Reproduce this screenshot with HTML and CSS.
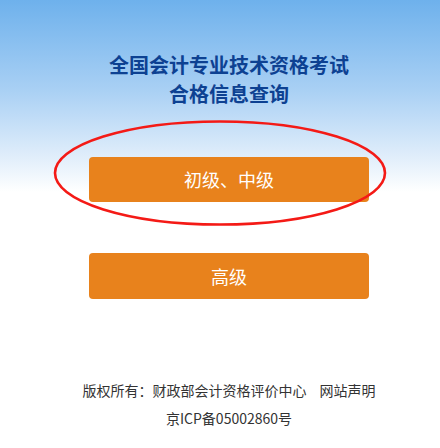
FILE: index.html
```html
<!DOCTYPE html>
<html lang="zh-CN">
<head>
  <meta charset="UTF-8" />
  <title>合格信息查询</title>
  <link rel="stylesheet" href="styles.css">
</head>
<body>
  <div class="page">
    <h1 class="title">全国会计专业技术资格考试<br>合格信息查询</h1>

    <div class="menu">
      <a class="level-btn" href="#">初级、中级</a>
      <a class="level-btn" href="#">高级</a>
      <!-- red mark round the first button -->
      <svg class="mark" width="336" height="108" viewBox="0 0 336 108">
        <ellipse cx="168" cy="54" rx="165" ry="51.5" fill="none" stroke="#f41a16" stroke-width="2.6" />
      </svg>
    </div>

    <div class="footer">
      <p>版权所有：财政部会计资格评价中心<span class="notice">网站声明</span></p>
      <p>京ICP备05002860号</p>
    </div>
  </div>
</body>
</html>
```

FILE: styles.css
```css
body { margin: 0; font-family: "Noto Sans CJK SC", "Noto Sans", sans-serif; }
.page {
  height: 448px;
  padding: 50px 0 0 18px;
  box-sizing: border-box;
  background: linear-gradient(to bottom, #6eb1ec 0px, #a9d0f4 90px, #e3effb 160px, #ffffff 192px, #ffffff 100%);
}
.title {
  margin: 0;
  text-align: center;
  font-size: 20px;
  line-height: 29px;
  font-weight: bold;
  color: #0d4192;
}
.menu {
  position: relative;
  width: 280px;
  margin: 49px auto 0;
  display: flex;
  flex-direction: column;
  gap: 51px;
}
.level-btn {
  display: block;
  height: 45px;
  line-height: 45px;
  text-align: center;
  background: #e8821c;
  color: #fff;
  font-size: 18px;
  border-radius: 4px;
  text-decoration: none;
}
.level-btn + .level-btn { height: 46px; line-height: 46px; }
.mark {
  position: absolute;
  left: -37px;
  top: -38px;
  pointer-events: none;
}
.footer {
  margin-top: 77px;
  text-align: center;
  font-size: 14px;
  color: #333;
}
.footer p { margin: 0; line-height: 28px; }
.notice { margin-left: 13px; }
```
